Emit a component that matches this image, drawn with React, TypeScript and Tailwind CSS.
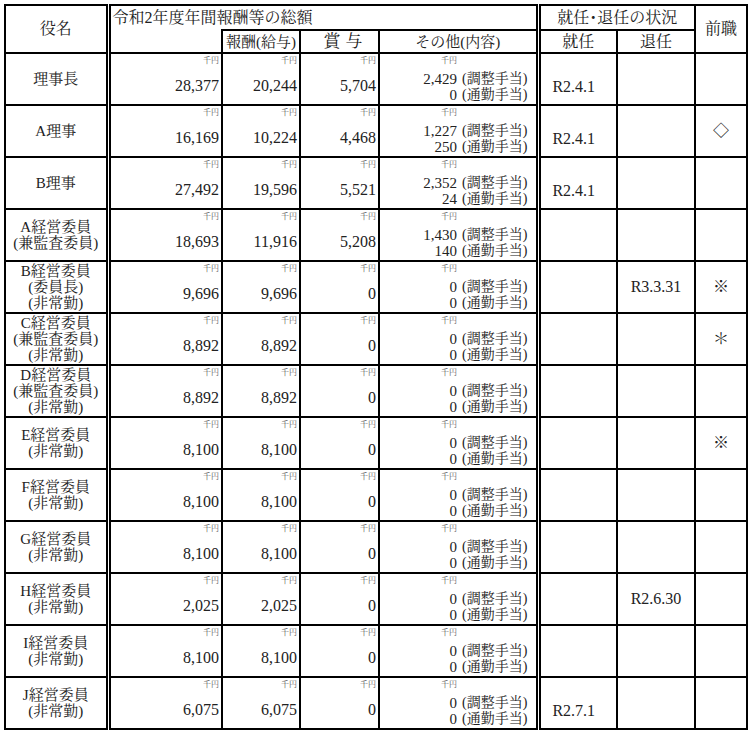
import React from "react";

type Row = {
  name: string[];
  total: string;
  salary: string;
  bonus: string;
  adjust: string;
  commute: string;
  start?: string;
  end?: string;
  prev?: string;
};

const rows: Row[] = [
  { name: ["理事長"], total: "28,377", salary: "20,244", bonus: "5,704", adjust: "2,429", commute: "0", start: "R2.4.1" },
  { name: ["A理事"], total: "16,169", salary: "10,224", bonus: "4,468", adjust: "1,227", commute: "250", start: "R2.4.1", prev: "◇" },
  { name: ["B理事"], total: "27,492", salary: "19,596", bonus: "5,521", adjust: "2,352", commute: "24", start: "R2.4.1" },
  { name: ["A経営委員", "(兼監査委員)"], total: "18,693", salary: "11,916", bonus: "5,208", adjust: "1,430", commute: "140" },
  { name: ["B経営委員", "(委員長)", "(非常勤)"], total: "9,696", salary: "9,696", bonus: "0", adjust: "0", commute: "0", end: "R3.3.31", prev: "※" },
  { name: ["C経営委員", "(兼監査委員)", "(非常勤)"], total: "8,892", salary: "8,892", bonus: "0", adjust: "0", commute: "0", prev: "＊" },
  { name: ["D経営委員", "(兼監査委員)", "(非常勤)"], total: "8,892", salary: "8,892", bonus: "0", adjust: "0", commute: "0" },
  { name: ["E経営委員", "(非常勤)"], total: "8,100", salary: "8,100", bonus: "0", adjust: "0", commute: "0", prev: "※" },
  { name: ["F経営委員", "(非常勤)"], total: "8,100", salary: "8,100", bonus: "0", adjust: "0", commute: "0" },
  { name: ["G経営委員", "(非常勤)"], total: "8,100", salary: "8,100", bonus: "0", adjust: "0", commute: "0" },
  { name: ["H経営委員", "(非常勤)"], total: "2,025", salary: "2,025", bonus: "0", adjust: "0", commute: "0", end: "R2.6.30" },
  { name: ["I経営委員", "(非常勤)"], total: "8,100", salary: "8,100", bonus: "0", adjust: "0", commute: "0" },
  { name: ["J経営委員", "(非常勤)"], total: "6,075", salary: "6,075", bonus: "0", adjust: "0", commute: "0", start: "R2.7.1" },
];

const cell = "border-2 border-black p-0";
const dbl = "border-r-[5px] [border-right-style:double]";

function Yen({ value }: { value: string }) {
  return (
    <td className={`${cell} align-top pr-[2px] text-right`}>
      <div className="pt-[1px] text-[8px] leading-[12px] text-[#555]">千円</div>
      <div className="mt-[9px] text-[16px] leading-[20px]">{value}</div>
    </td>
  );
}

function Other({ adjust, commute }: { adjust: string; commute: string }) {
  return (
    <td className={`${cell} ${dbl} align-top`}>
      <div className="grid grid-cols-[77px_1fr] gap-x-[5px]">
        <div className="pt-[1px] text-right text-[8px] leading-[12px] text-[#555]">千円</div>
        <div />
        <div className="mt-[4px] text-right text-[15px] leading-[16px]">{adjust}</div>
        <div className="mt-[4px] text-[14px] leading-[16px]">(調整手当)</div>
        <div className="text-right text-[15px] leading-[16px]">{commute}</div>
        <div className="text-[14px] leading-[16px]">(通勤手当)</div>
      </div>
    </td>
  );
}

export default function App() {
  return (
    <div className="min-h-screen bg-white pl-[4px] pt-[4px] text-[#222] font-['Liberation_Serif','Noto_Serif_CJK_JP','Noto_Sans_CJK_JP',serif]">
      <table className="w-[744px] table-fixed border-collapse">
        <colgroup>
          <col className="w-[103px]" />
          <col className="w-[114px]" />
          <col className="w-[78px]" />
          <col className="w-[79px]" />
          <col className="w-[159px]" />
          <col className="w-[79px]" />
          <col className="w-[78px]" />
          <col className="w-[52px]" />
        </colgroup>
        <thead>
          <tr className="h-[25px]">
            <th rowSpan={2} className={`${cell} ${dbl} text-center text-[16px] font-normal`}>
              役名
            </th>
            <th colSpan={4} className={`${cell} ${dbl} border-b-0 pl-[2px] text-left text-[16px] font-normal leading-[20px]`}>
              令和2年度年間報酬等の総額
            </th>
            <th colSpan={2} className={`${cell} text-center text-[16px] font-normal leading-[20px]`}>
              就任･退任の状況
            </th>
            <th rowSpan={2} className={`${cell} text-center text-[16px] font-normal`}>
              前職
            </th>
          </tr>
          <tr className="h-[23px]">
            <th className={`${cell} border-t-0`} />
            <th className={`${cell} text-center text-[15px] font-normal leading-[20px]`}>報酬(給与)</th>
            <th className={`${cell} pl-[12px] text-center text-[17px] font-normal leading-[20px] tracking-[0.3em]`}>賞与</th>
            <th className={`${cell} ${dbl} text-center text-[15px] font-normal leading-[20px]`}>その他(内容)</th>
            <th className={`${cell} text-center text-[16px] font-normal leading-[20px]`}>就任</th>
            <th className={`${cell} text-center text-[16px] font-normal leading-[20px]`}>退任</th>
          </tr>
        </thead>
        <tbody>
          {rows.map((r) => (
            <tr key={r.name[0]} className="h-[52px]">
              <td className={`${cell} ${dbl} text-center align-middle text-[15px] leading-[16px]`}>
                {r.name.map((n) => (
                  <div key={n}>{n}</div>
                ))}
              </td>
              <Yen value={r.total} />
              <Yen value={r.salary} />
              <Yen value={r.bonus} />
              <Other adjust={r.adjust} commute={r.commute} />
              <td className={`${cell} align-top text-center`}>
                {r.start && <div className="pt-[23px] pr-[9px] text-[16px] leading-[20px]">{r.start}</div>}
              </td>
              <td className={`${cell} align-middle text-center text-[16px] leading-[20px]`}>
                {r.end}
              </td>
              <td className={`${cell} align-middle text-center text-[16px] leading-[20px]`}>
                {r.prev}
              </td>
            </tr>
          ))}
        </tbody>
      </table>
    </div>
  );
}
